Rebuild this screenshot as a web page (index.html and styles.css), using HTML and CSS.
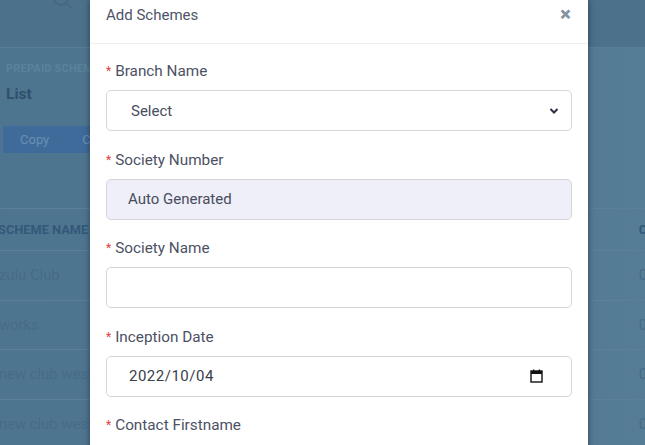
FILE: index.html
```html
<!DOCTYPE html>
<html>
<head>
<meta charset="utf-8">
<link rel="stylesheet" href="styles.css">
</head>
<body>
<div class="page">
  <div class="topbar">
    <svg class="search" width="24" height="24" viewBox="0 0 24 24"><circle cx="9" cy="-2" r="7" fill="none" stroke="#46697f" stroke-width="2"/><path d="M14 3l6 5" stroke="#46697f" stroke-width="2"/></svg>
  </div>
  <div class="content">
    <div class="crumb">PREPAID SCHEMES</div>
    <div class="list-title">List</div>
    <div class="btns"><span class="btn">Copy</span><span class="btn">CSV</span></div>
  </div>
  <div class="table">
    <div class="row head"><span class="c1">SCHEME NAME</span><span class="c2">C</span></div>
    <div class="row"><span class="c1">zulu Club</span><span class="c2">0</span></div>
    <div class="row"><span class="c1">works</span><span class="c2">0</span></div>
    <div class="row"><span class="c1">new club west</span><span class="c2">0</span></div>
    <div class="row"><span class="c1">new club west</span><span class="c2">0</span></div>
  </div>
</div>

<div class="modal">
  <div class="modal-head">
    <span class="modal-title">Add Schemes</span>
    <span class="close">&#x2715;</span>
  </div>
  <div class="modal-body">
    <div class="group">
      <div class="label"><span class="req">*</span>Branch Name</div>
      <div class="field">
        <span>Select</span>
        <svg width="10" height="8" viewBox="0 0 10 8"><path d="M1.5 2l3.5 3.5L8.5 2" fill="none" stroke="#2c2f45" stroke-width="2"/></svg>
      </div>
    </div>
    <div class="group">
      <div class="label"><span class="req">*</span>Society Number</div>
      <div class="field readonly"><span>Auto Generated</span></div>
    </div>
    <div class="group">
      <div class="label"><span class="req">*</span>Society Name</div>
      <div class="field"></div>
    </div>
    <div class="group">
      <div class="label"><span class="req">*</span>Inception Date</div>
      <div class="field date">
        <span>2022/10/04</span>
        <svg class="cal" width="13" height="14" viewBox="0 0 13 14"><rect x="1" y="2" width="11" height="11" fill="none" stroke="#111" stroke-width="1.4"/><rect x="1" y="2" width="11" height="3" fill="#111"/><rect x="3" y="0.5" width="1.4" height="2" fill="#111"/><rect x="8.6" y="0.5" width="1.4" height="2" fill="#111"/></svg>
      </div>
    </div>
    <div class="group">
      <div class="label"><span class="req">*</span>Contact Firstname</div>
    </div>
  </div>
</div>
</body>
</html>
```

FILE: styles.css
```css
* { box-sizing: border-box; }
html, body { margin: 0; padding: 0; }
body {
  width: 645px;
  height: 445px;
  overflow: hidden;
  position: relative;
  font-family: Roboto, "Liberation Sans", sans-serif;
  background: #4f7691;
}
.page {
  width: 645px;
  height: 445px;
  background: linear-gradient(90deg, #4e7590 0%, #4f7690 60%, #567d96 100%);
}
.topbar {
  height: 48px;
  background: #4b718b;
  border-bottom: 1px solid #56809a;
  position: relative;
}
.search { position: absolute; left: 52px; top: 0; }
.content { padding: 14px 0 0 6px; }
.crumb {
  font-size: 11px;
  font-weight: 700;
  color: #5a829c;
  letter-spacing: 0.2px;
  line-height: 14px;
}
.list-title {
  margin-top: 8px;
  font-size: 15.5px;
  font-weight: 700;
  color: #2f516a;
  line-height: 20px;
}
.btns { margin: 22px 0 0 -3px; display: flex; }
.btn {
  background: #3f6b9a;
  color: #6a8fb4;
  font-size: 13px;
  line-height: 27px;
  height: 27px;
  padding: 0 16px 0 17px;
}
.btn + .btn { padding-left: 17px; }
.table { margin-top: 55px; }
.row {
  height: 49.6px;
  border-top: 1px solid #5a809a;
  display: flex;
  align-items: center;
  justify-content: space-between;
  font-size: 14.8px;
  color: #456c88;
}
.row.head {
  height: 42px;
  font-size: 12.8px;
  font-weight: 700;
  color: #32597a;
}
.c1 { margin-left: -1px; white-space: nowrap; }
.c2 { margin-right: -2px; }
.head .c1 { margin-left: -2px; }

.modal {
  position: absolute;
  left: 90px;
  top: 0;
  width: 498px;
  height: 460px;
  background: #fff;
  box-shadow: 0 0 6px rgba(20, 30, 40, 0.6);
}
.modal-head {
  height: 44px;
  border-bottom: 1px solid #eceef2;
  display: flex;
  justify-content: space-between;
  padding: 5px 17px 0 16px;
}
.modal-title {
  font-size: 15px;
  line-height: 20px;
  color: #4f5368;
}
.close {
  font-size: 13px;
  font-weight: 700;
  color: #8493a3;
  line-height: 20px;
  -webkit-text-stroke: 0.8px #8493a3;
}
.modal-body { padding: 17px 16px 0 16px; }
.group { margin-bottom: 18.5px; }
.label {
  display: flex;
  align-items: baseline;
  height: 20px;
  font-size: 15.3px;
  line-height: 20px;
  color: #4c5164;
  margin-bottom: 9px;
}
.req {
  color: #e0413e;
  font-size: 12px;
  line-height: 20px;
  margin-right: 4px;
  position: relative;
  top: -1px;
}
.field {
  height: 41px;
  border: 1px solid #d6d6da;
  border-radius: 5px;
  display: flex;
  align-items: center;
  justify-content: space-between;
  padding: 0 12px 0 24px;
  font-size: 15px;
  color: #484c5e;
}
.field.readonly { background: #eeeff8; padding-left: 21px; }
.field.date { padding-left: 22px; padding-right: 28px; letter-spacing: 0.5px; color: #3a3d4a; }
.cal { margin-top: -1px; }
```
